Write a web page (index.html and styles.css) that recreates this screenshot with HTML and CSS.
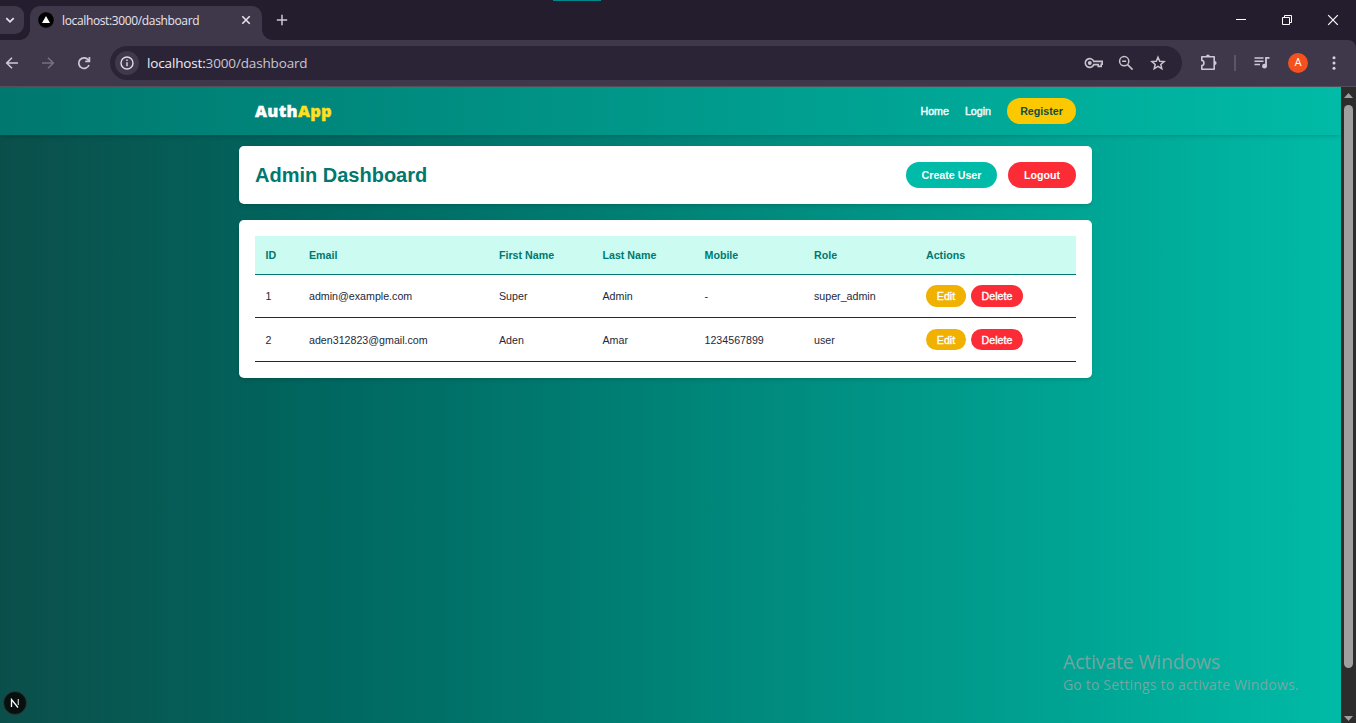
FILE: index.html
```html
<!DOCTYPE html>
<html lang="en">
<head>
<meta charset="utf-8">
<title>localhost:3000/dashboard</title>
<link rel="stylesheet" href="styles.css">
</head>
<body>
<div class="browser">
  <div class="tabstrip">
    <div class="accent"></div>
    <div class="tab-search"><svg width="24" height="28" viewBox="0 0 24 28"><path d="M6.3 12.2l3.7 3.6 3.7-3.6" fill="none" stroke="#e4dfea" stroke-width="1.8"/></svg></div>
    <div class="tab">
      <svg class="favicon" width="16" height="16" viewBox="0 0 16 16"><circle cx="8" cy="8" r="7.8" fill="#000"/><path d="M8 4l4 7H4z" fill="#fff"/></svg>
      <span class="tab-title">localhost:3000/dashboard</span>
      <svg class="tab-close" width="10" height="10" viewBox="0 0 10 10"><path d="M1.3 1.3l7.4 7.4M8.7 1.3L1.3 8.7" stroke="#e8e3ee" stroke-width="1.6"/></svg>
    </div>
    <svg class="new-tab" width="12" height="12" viewBox="0 0 12 12"><path d="M6 .8v10.4M.8 6h10.4" stroke="#cfc6dc" stroke-width="1.5"/></svg>
    <div class="window-controls">
      <svg width="12" height="12" viewBox="0 0 12 12"><path d="M1 5.5h10" stroke="#fff"/></svg>
      <svg width="12" height="12" viewBox="0 0 12 12"><path d="M1.5 3.5h7v7h-7zM3.5 3.5v-2h7v7h-2" fill="none" stroke="#fff"/></svg>
      <svg width="12" height="12" viewBox="0 0 12 12"><path d="M1.2 1.2l9.6 9.6M10.8 1.2l-9.6 9.6" stroke="#fff" stroke-width="1.2"/></svg>
    </div>
  </div>

  <div class="toolbar">
    <div class="nav-icons">
      <svg width="16" height="16" viewBox="0 0 16 16"><path d="M14 8H3M8 2.7L2.7 8 8 13.3" fill="none" stroke="#cfc6dc" stroke-width="1.6"/></svg>
      <svg width="16" height="16" viewBox="0 0 16 16"><path d="M2 8h11M8 2.7L13.3 8 8 13.3" fill="none" stroke="#776f83" stroke-width="1.6"/></svg>
      <svg width="16" height="16" viewBox="0 0 16 16"><path d="M13 10a5.3 5.3 0 1 1-.8-5.2l1 1.2M13.4 2v4.3H9.2" fill="none" stroke="#cfc6dc" stroke-width="1.7"/></svg>
    </div>
    <div class="omnibox">
      <span class="site-info"><svg width="14" height="14" viewBox="0 0 14 14"><circle cx="7" cy="7" r="6" fill="none" stroke="#e0dae7" stroke-width="1.4"/><path d="M7 6.2v4M7 3.6v1.5" stroke="#e0dae7" stroke-width="1.4"/></svg></span>
      <span class="url"><b>localhost:</b>3000/dashboard</span>
      <div class="omni-icons">
        <svg width="20" height="16" viewBox="0 0 20 16"><path d="M9.800 6.400h8.400v2.800h-1v2.200h-3V9.600H9.800A4.400 4.400 0 1 1 9.800 6.400z" fill="none" stroke="#c8c3cd" stroke-width="1.600"/><circle cx="5.800" cy="8" r="2" fill="#c8c3cd"/></svg>
        <svg width="16" height="16" viewBox="0 0 16 16"><circle cx="6.200" cy="6.200" r="4.600" fill="none" stroke="#c8c3cd" stroke-width="1.5"/><path d="M9.600 9.600l5 5M4.200 6.200h4" stroke="#c8c3cd" stroke-width="1.5"/></svg>
        <svg width="16" height="16" viewBox="0 0 16 16"><path d="M8 2.200l1.700 4 4.400.4-3.300 2.900 1 4.200L8 11.400l-3.800 2.300 1-4.200-3.300-2.900 4.400-.4z" fill="none" stroke="#c8c3cd" stroke-width="1.5"/></svg>
      </div>
    </div>
    <div class="toolbar-end">
      <svg class="puzzle" width="18" height="18" viewBox="0 0 18 18"><path d="M1.800 6.500V2.800H14.200V15.200H1.800V11.500c2.800 0 2.800-5 0-5z" fill="none" stroke="#cfc6dc" stroke-width="1.600" stroke-linejoin="round"/><path d="M6 2.500a1.900 1.900 0 0 1 3.800 0zM14.700 7.100a1.900 1.900 0 0 1 0 3.800z" fill="#cfc6dc"/></svg>
      <i class="divider"></i>
      <svg class="media" width="16" height="14" viewBox="0 0 16 14"><path d="M.5 2h9M.5 5.200h9M.5 8.400h5.500" stroke="#cfc6dc" stroke-width="1.500"/><path d="M12 10V1.900h3.500" fill="none" stroke="#cfc6dc" stroke-width="1.800"/><circle cx="10.500" cy="10.200" r="2.400" fill="#cfc6dc"/></svg>
      <span class="avatar">A</span>
      <svg class="kebab" width="4" height="16" viewBox="0 0 4 16"><g fill="#d8d0e2"><circle cx="2" cy="2.700" r="1.500"/><circle cx="2" cy="8" r="1.500"/><circle cx="2" cy="13.300" r="1.500"/></g></svg>
    </div>
  </div>

  <div class="viewport">
    <div class="page">
      <nav class="navbar">
        <div class="navbar-inner">
          <div class="brand">Auth<span>App</span></div>
          <div class="links"><a>Home</a><a>Login</a><a class="register">Register</a></div>
        </div>
      </nav>
      <main class="content">
        <section class="card head-card">
          <h1>Admin Dashboard</h1>
          <div class="head-actions"><button class="btn create">Create User</button><button class="btn logout">Logout</button></div>
        </section>
        <section class="card table-card">
          <table>
            <colgroup><col class="c-id"><col class="c-email"><col class="c-first"><col class="c-last"><col class="c-mobile"><col class="c-role"><col></colgroup>
            <thead><tr><th>ID</th><th>Email</th><th>First Name</th><th>Last Name</th><th>Mobile</th><th>Role</th><th>Actions</th></tr></thead>
            <tbody>
              <tr><td>1</td><td>admin@example.com</td><td>Super</td><td>Admin</td><td>-</td><td>super_admin</td><td><div class="row-actions"><button class="edit">Edit</button><button class="delete">Delete</button></div></td></tr>
              <tr><td>2</td><td>aden312823@gmail.com</td><td>Aden</td><td>Amar</td><td>1234567899</td><td>user</td><td><div class="row-actions"><button class="edit">Edit</button><button class="delete">Delete</button></div></td></tr>
            </tbody>
          </table>
        </section>
      </main>
      <div class="dev-badge"><svg width="10" height="10" viewBox="0 0 10 10"><path d="M1.500 9V1.500L8 9.500" fill="none" stroke="#fff" stroke-width="1.300"/><path d="M8.300 1v6" stroke="#ccc" stroke-width="1.200"/></svg></div>
      <div class="watermark"><div class="wm-title">Activate Windows</div><div class="wm-sub">Go to Settings to activate Windows.</div></div>
    </div>
    <div class="scrollbar">
      <svg width="9" height="5" viewBox="0 0 9 5"><path d="M4.500 0L9 5H0z" fill="#9f9f9f"/></svg>
      <div class="thumb"></div>
      <svg width="9" height="5" viewBox="0 0 9 5"><path d="M0 0h9L4.500 5z" fill="#9f9f9f"/></svg>
    </div>
  </div>
</div>
</body>
</html>
```
FILE: styles.css
```css
* { box-sizing: border-box; }
body { margin: 0; overflow: hidden; font-family: "Liberation Sans", Arial, sans-serif; }
svg { display: block; flex: none; }
.browser { width: 1356px; height: 723px; display: flex; flex-direction: column; background: #241d2e; }

.tabstrip { position: relative; height: 40px; flex: none; display: flex; padding-top: 6px; background: #241d2e; }
.accent { position: absolute; left: 553px; top: 0; width: 48px; height: 1px; background: #00868b; }
.tab-search { width: 24px; height: 28px; border-radius: 0 9px 9px 0; background: #3f384b; }
.tab { position: relative; width: 232px; height: 34px; margin-left: 6px; padding: 0 11px 6px 8px; display: flex; align-items: center; background: #3f384b; border-radius: 10px 10px 0 0; }
.tab::before, .tab::after { content: ""; position: absolute; bottom: 0; width: 10px; height: 10px; }
.tab::before { left: -10px; background: radial-gradient(circle at 0 0, transparent 9.5px, #3f384b 10px); }
.tab::after { right: -10px; background: radial-gradient(circle at 100% 0, transparent 9.5px, #3f384b 10px); }
.tab-title { margin-left: 8px; padding-top: 2px; font: 12px/16px "Open Sans", sans-serif; letter-spacing: -0.36px; color: #e9e4ee; white-space: nowrap; }
.tab-close { margin-left: auto; }
.new-tab { margin: 8px 0 0 14px; }
.window-controls { margin: 8px 17px 0 auto; display: flex; gap: 34px; }

.toolbar { height: 47px; flex: none; display: flex; align-items: center; padding-bottom: 1px; background: #3f384b; border-bottom: 1px solid #554e5b; border-radius: 0 8px 0 0; }
.nav-icons { width: 110px; padding-left: 4px; display: flex; gap: 20px; }
.omnibox { width: 1072px; height: 34px; padding: 0 16px 0 5px; border-radius: 17px; background: #2b2436; display: flex; align-items: center; }
.site-info { width: 24px; height: 24px; border-radius: 50%; background: #40394b; display: flex; align-items: center; justify-content: center; }
.url { margin-left: 8px; font: 13.5px/20px "Open Sans", sans-serif; color: #cbc4d3; letter-spacing: -0.15px; }
.url b { font-weight: 400; color: #f0ecf4; }
.omni-icons { margin-left: auto; display: flex; gap: 16px; align-items: center; }
.omni-icons svg:first-child { margin-right: -2px; }
.toolbar-end { flex: 1; display: flex; align-items: center; padding-left: 18px; }
.divider { width: 2px; height: 16px; margin-left: 16px; background: #5c5468; }
.media { margin-left: 18px; }
.avatar { width: 20px; height: 20px; margin-left: 18px; border-radius: 50%; background: #f4511e; color: #fff; font: 11px/20px Roboto, sans-serif; text-align: center; }
.kebab { margin-left: 24px; }

.viewport { flex: 1; display: flex; min-height: 0; }
.page { position: relative; width: 1341px; background: linear-gradient(to right in oklab, oklch(38.6% .063 188.416), oklch(70.4% .14 182.503)); }
.navbar { position: relative; height: 48px; background: linear-gradient(to right in oklab, oklch(51.1% .096 186.391), oklch(70.4% .14 182.503)); box-shadow: 0 3px 4px -1px rgba(0,0,0,.1), 0 1px 3px -1px rgba(0,0,0,.1); }
.navbar-inner { width: 821px; height: 48px; margin-left: 255px; display: flex; align-items: center; justify-content: space-between; }
.brand { font: 800 16.5px/24px "Open Sans", sans-serif; letter-spacing: .3px; color: #fff; -webkit-text-stroke: .35px currentColor; }
.brand span { color: #ffdf20; }
.links { display: flex; align-items: center; gap: 16px; font-size: 10.667px; color: #f0fdfa; -webkit-text-stroke: .45px currentColor; }
.register { width: 69px; height: 26px; line-height: 26px; border-radius: 13px; background: #fcc800; color: #0b4f4a; text-align: center; font-weight: 700; -webkit-text-stroke: 0; }
.content { width: 853px; margin-left: 239px; padding-top: 11px; display: flex; flex-direction: column; gap: 16px; }
.card { background: #fff; border-radius: 5px; box-shadow: 0 3px 4px -1px rgba(0,0,0,.1), 0 1px 3px -1px rgba(0,0,0,.1); }
.head-card { height: 58px; padding: 0 16px; display: flex; align-items: center; justify-content: space-between; }
h1 { margin: 0; font-size: 20px; line-height: 26px; color: #00786f; }
.head-actions { display: flex; gap: 11px; }
button { border: 0; padding: 0; font-family: inherit; font-size: 10.667px; color: #fff; }
.btn { height: 26px; border-radius: 13px; font-weight: 700; }
.create { width: 91px; background: #00bba7; }
.logout { width: 68px; background: #fb2c36; }
.table-card { height: 158px; padding: 16px; }
table { width: 821px; table-layout: fixed; border-collapse: separate; border-spacing: 0; font-size: 10.667px; color: #1e2939; }
.c-id { width: 43.500px; }
.c-email { width: 190px; }
.c-first { width: 103.500px; }
.c-last { width: 102px; }
.c-mobile { width: 109.500px; }
.c-role { width: 112px; }
th, td { padding: 0 0 0 10.500px; text-align: left; white-space: nowrap; }
th { height: 39px; background: #cbfbf1; color: #00786f; border-bottom: 1px solid #00786f; }
td { height: 43px; border-bottom: 1px solid #1e2939; }
tbody tr:last-child td { height: 44px; }
.row-actions { display: flex; gap: 5px; }
.row-actions button { height: 22px; border-radius: 11px; -webkit-text-stroke: .35px currentColor; }
tbody tr:last-child button { height: 21px; }
.edit { width: 40px; background: #f0b100; }
.delete { width: 52px; background: #fb2c36; }
.dev-badge { position: absolute; left: 3px; bottom: 8px; width: 24px; height: 24px; border-radius: 50%; background: #080f0f; border: 1px solid #263b39; display: flex; align-items: center; justify-content: center; }
.watermark { position: absolute; left: 1063px; top: 562px; color: rgba(164,164,164,.72); font-family: "Open Sans", sans-serif; white-space: nowrap; }
.wm-title { font-size: 19.500px; line-height: 25px; letter-spacing: -.18px; }
.wm-sub { font-size: 14px; line-height: 20px; letter-spacing: .18px; padding-top: 1px; }
.scrollbar { width: 15px; background: #2c2c2c; display: flex; flex-direction: column; align-items: center; padding: 6px 0 2px; }
.thumb { width: 9px; height: 563px; margin: 7px 0 auto; border-radius: 5px; background: #9f9f9f; }
```
